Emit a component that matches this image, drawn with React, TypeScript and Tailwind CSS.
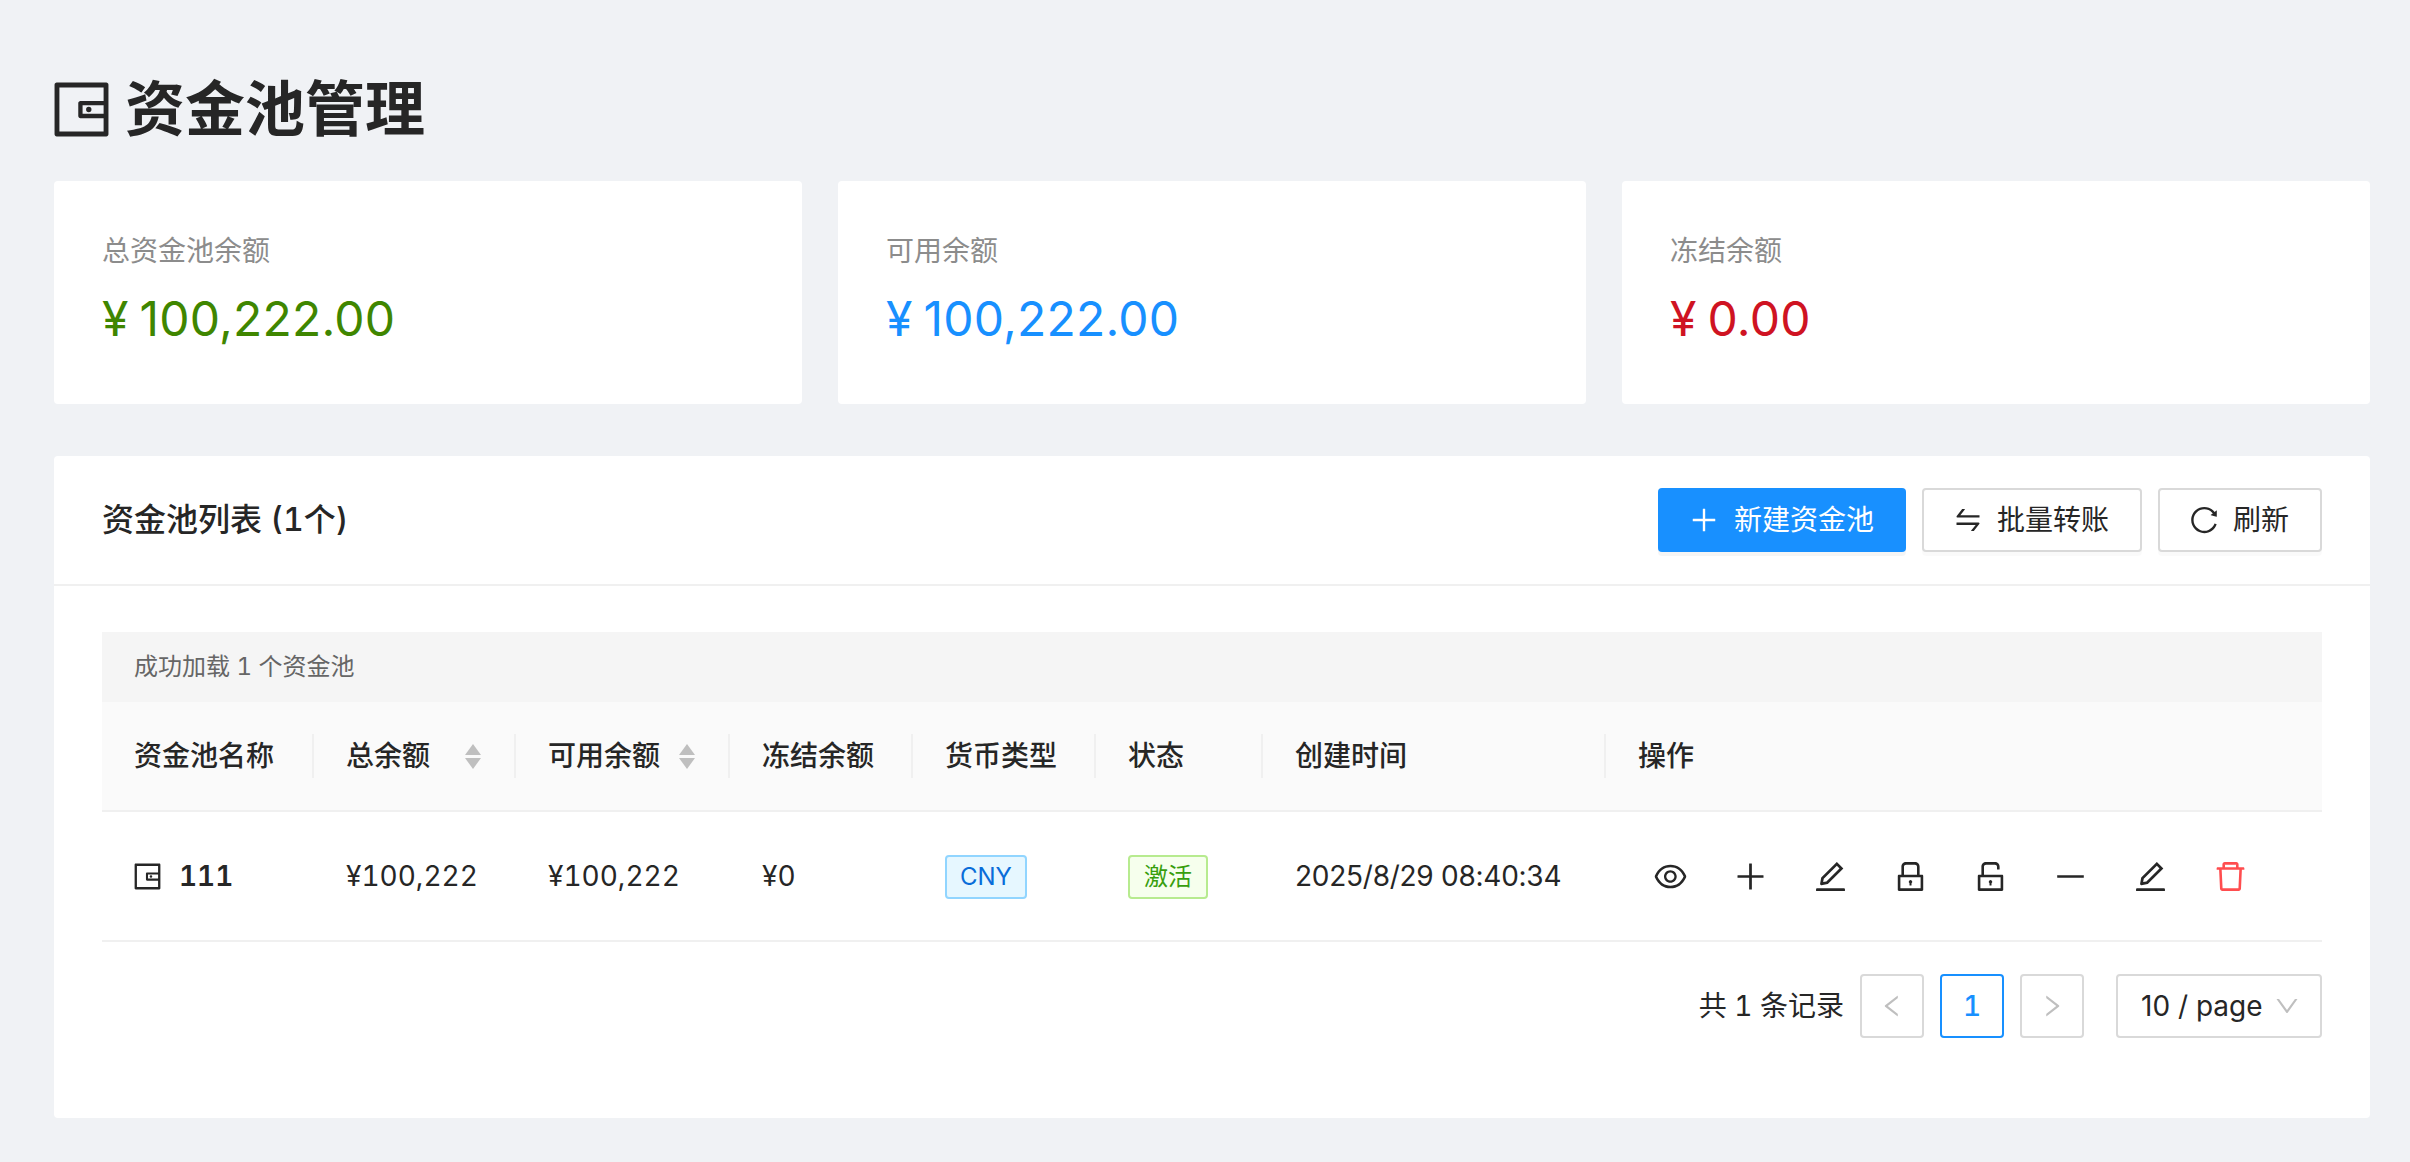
import type { ReactNode } from "react";
import {
  AiOutlineWallet,
  AiOutlinePlus,
  AiOutlineSwap,
  AiOutlineReload,
  AiOutlineEye,
  AiOutlineEdit,
  AiOutlineLock,
  AiOutlineUnlock,
  AiOutlineMinus,
  AiOutlineDelete,
  AiOutlineLeft,
  AiOutlineRight,
  AiOutlineDown,
} from "react-icons/ai";

const GRID = "grid grid-cols-[212px_202px_214px_183px_183px_167px_343px_1fr]";

function Stat({ label, value, color }: { label: string; value: string; color: string }) {
  return (
    <div className="flex-1 bg-white rounded-[4px] p-12">
      <div className="text-[28px] leading-[44px] text-[#8c8c8c] mb-2">{label}</div>
      <div className={`text-[48px] leading-[75px] flex normal-nums tracking-[0.2px] ${color}`}>
        <span className="mr-[11px]">¥</span>
        <span>{value}</span>
      </div>
    </div>
  );
}

function Btn({ icon, children, primary }: { icon: ReactNode; children: ReactNode; primary?: boolean }) {
  return (
    <button
      className={
        primary
          ? "h-16 pl-[30px] pr-[32px] flex items-center gap-[14px] rounded-[4px] text-[28px] bg-[#1890ff] text-white shadow-[0_4px_0_rgba(0,0,0,0.04)]"
          : "h-16 pl-[28px] pr-[31px] flex items-center gap-[13px] rounded-[4px] text-[28px] bg-white text-[#262626] border-2 border-[#d9d9d9] shadow-[0_4px_0_rgba(0,0,0,0.02)]"
      }
    >
      {icon}
      {children}
    </button>
  );
}

function Th({ children, sort }: { children?: ReactNode; sort?: boolean }) {
  return (
    <div className="flex items-center">
      <div className="h-[44px] w-full flex items-center justify-between pl-8 pr-[33px] border-r-2 border-[#f0f0f0]">
        <span>{children}</span>
        {sort && (
          <span className="flex flex-col gap-[3px]">
            <span className="w-0 h-0 border-x-[8px] border-x-transparent border-b-[11px] border-b-[#bfbfbf]" />
            <span className="w-0 h-0 border-x-[8px] border-x-transparent border-t-[11px] border-t-[#bfbfbf]" />
          </span>
        )}
      </div>
    </div>
  );
}

function PageBox({ children, active }: { children: ReactNode; active?: boolean }) {
  return (
    <div
      className={
        active
          ? "w-16 h-16 flex items-center justify-center rounded-[4px] border-2 border-[#1890ff] text-[#1890ff] font-medium"
          : "w-16 h-16 flex items-center justify-center rounded-[4px] border-2 border-[#d9d9d9] text-[#bfbfbf]"
      }
    >
      {children}
    </div>
  );
}

export default function App() {
  return (
    <div className="min-h-[1162px] bg-[#f0f2f5] pl-[54px] pr-[40px] pt-[72px] pb-[44px] text-[#262626] tabular-nums font-['Inter','Noto_Sans_CJK_SC',sans-serif]">
      <h1 className="flex items-center gap-[9px] text-[60px] leading-[74px] font-bold -ml-[7px] mb-[35px]">
        <AiOutlineWallet size={69} />
        资金池管理
      </h1>

      <div className="flex gap-9">
        <Stat label="总资金池余额" value="100,222.00" color="text-[#3f8600]" />
        <Stat label="可用余额" value="100,222.00" color="text-[#1890ff]" />
        <Stat label="冻结余额" value="0.00" color="text-[#cf1322]" />
      </div>

      <div className="mt-[52px] bg-white rounded-[4px]">
        <div className="h-[130px] px-12 flex items-center justify-between border-b-2 border-[#f0f0f0]">
          <div className="text-[32px] font-medium">资金池列表 (1个)</div>
          <div className="flex gap-4">
            <Btn primary icon={<AiOutlinePlus size={32} />}>新建资金池</Btn>
            <Btn icon={<AiOutlineSwap size={32} />}>批量转账</Btn>
            <Btn icon={<AiOutlineReload size={32} />}>刷新</Btn>
          </div>
        </div>

        <div className="pt-[46px] px-12 pb-[80px]">
          <div className="h-[70px] pl-8 flex items-center bg-[#f5f5f5] text-[24px] text-[#666666]">
            成功加载 1 个资金池
          </div>

          <div className={`${GRID} h-[110px] bg-[#fafafa] border-b-2 border-[#f0f0f0] text-[28px] font-medium`}>
            <Th>资金池名称</Th>
            <Th sort>总余额</Th>
            <Th sort>可用余额</Th>
            <Th>冻结余额</Th>
            <Th>货币类型</Th>
            <Th>状态</Th>
            <Th>创建时间</Th>
            <div className="flex items-center pl-8">操作</div>
          </div>

          <div className={`${GRID} h-[130px] border-b-2 border-[#f0f0f0] text-[28px] items-center`}>
            <div className="pl-8 flex items-center gap-[15px]">
              <AiOutlineWallet size={33} className="-ml-[3px]" />
              <span className="font-semibold">111</span>
            </div>
            <div className="pl-8">¥100,222</div>
            <div className="pl-8">¥100,222</div>
            <div className="pl-8">¥0</div>
            <div className="pl-8">
              <span className="inline-flex items-center h-[44px] px-[13px] rounded-[4px] border-2 border-[#91d5ff] bg-[#e6f7ff] text-[#096dd9] text-[24px]">
                CNY
              </span>
            </div>
            <div className="pl-8">
              <span className="inline-flex items-center h-[44px] px-[14px] rounded-[4px] border-2 border-[#b7eb8f] bg-[#f6ffed] text-[#389e0d] text-[24px]">
                激活
              </span>
            </div>
            <div className="pl-8 normal-nums tracking-[-0.26px]">2025/8/29 08:40:34</div>
            <div className="pl-8 flex gap-4">
              <span className="w-16 flex justify-center"><AiOutlineEye size={37} /></span>
              <span className="w-16 flex justify-center"><AiOutlinePlus size={37} /></span>
              <span className="w-16 flex justify-center"><AiOutlineEdit size={37} /></span>
              <span className="w-16 flex justify-center"><AiOutlineLock size={37} /></span>
              <span className="w-16 flex justify-center"><AiOutlineUnlock size={37} /></span>
              <span className="w-16 flex justify-center"><AiOutlineMinus size={37} /></span>
              <span className="w-16 flex justify-center"><AiOutlineEdit size={37} /></span>
              <span className="w-16 flex justify-center text-[#ff4d4f]"><AiOutlineDelete size={37} /></span>
            </div>
          </div>

          <div className="mt-8 flex items-center justify-end text-[28px]">
            <span className="mr-4">共 1 条记录</span>
            <div className="flex gap-4">
              <PageBox><AiOutlineLeft size={28} /></PageBox>
              <PageBox active>1</PageBox>
              <PageBox><AiOutlineRight size={28} /></PageBox>
            </div>
            <div className="ml-8 w-[206px] h-16 flex items-center justify-between pl-[23px] pr-[19px] rounded-[4px] border-2 border-[#d9d9d9] normal-nums">
              <span>10 / page</span>
              <AiOutlineDown size={28} className="text-[#bfbfbf]" />
            </div>
          </div>
        </div>
      </div>
    </div>
  );
}
